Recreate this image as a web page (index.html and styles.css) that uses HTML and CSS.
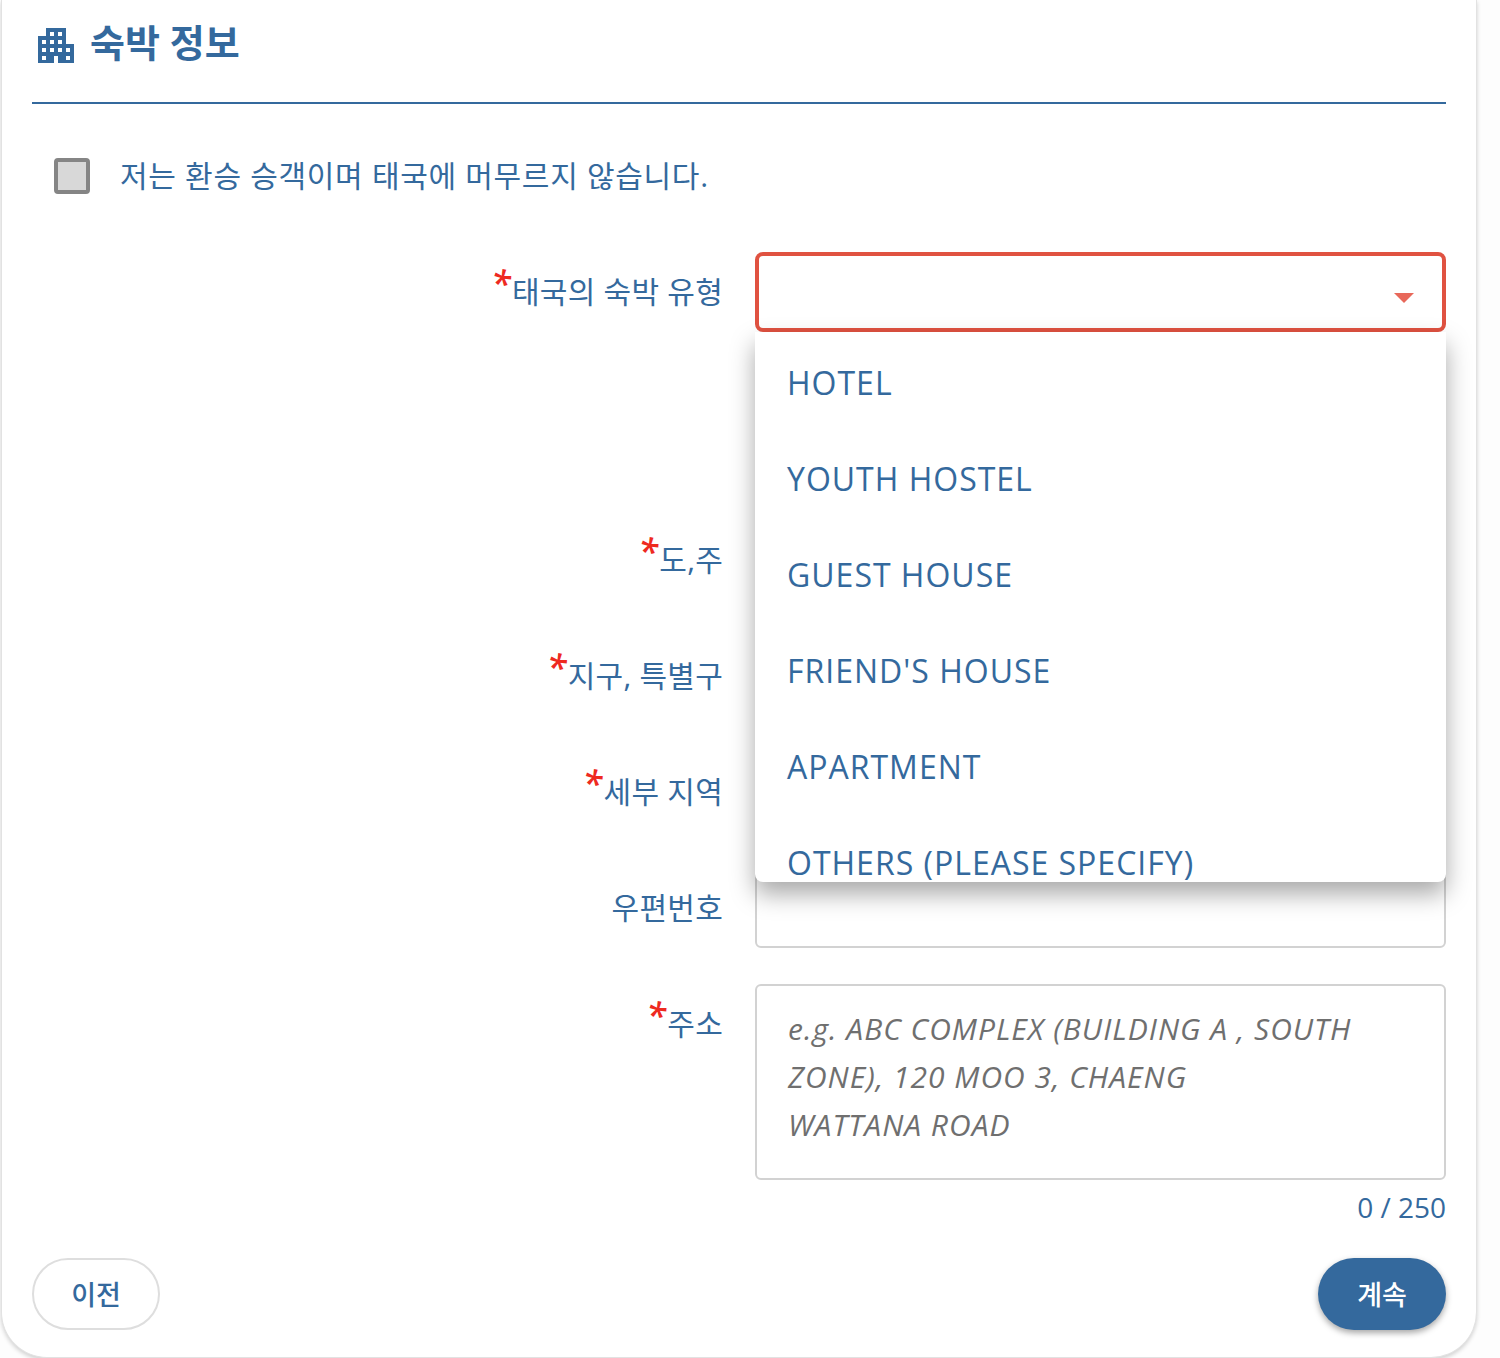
FILE: index.html
```html
<!DOCTYPE html>
<html lang="ko">
<head>
<meta charset="utf-8">
<title>숙박 정보</title>
<link rel="stylesheet" href="styles.css">
</head>
<body>
<main class="card">
  <header class="heading">
    <svg class="heading-icon" viewBox="0 0 36 35" aria-hidden="true">
      <path fill-rule="evenodd" d="M8 0H28V16H36V35H20V28H16V35H0V8H8ZM12 4V8H16V4ZM20 4V8H24V4ZM4 12V16H8V12ZM12 12V16H16V12ZM20 12V16H24V12ZM4 20V24H8V20ZM12 20V24H16V20ZM20 20V24H24V20ZM28 20V24H32V20ZM4 28V32H8V28ZM28 28V32H32V28Z"/>
    </svg>
    <h1 class="heading-text">숙박 정보</h1>
  </header>

  <label class="transit">
    <span class="checkbox"></span>
    <span>저는 환승 승객이며 태국에 머무르지 않습니다.</span>
  </label>

  <div class="form">
    <div class="row row-type">
      <div class="label"><span class="star">*</span>태국의 숙박 유형</div>
      <div class="field-wrap">
        <div class="field field-error"><span class="caret"></span></div>
        <ul class="menu">
          <li>HOTEL</li>
          <li>YOUTH HOSTEL</li>
          <li>GUEST HOUSE</li>
          <li>FRIEND'S HOUSE</li>
          <li>APARTMENT</li>
          <li>OTHERS (PLEASE SPECIFY)</li>
        </ul>
      </div>
    </div>
    <div class="row">
      <div class="label"><span class="star">*</span>도,주</div>
      <div class="field-wrap"><div class="field"></div></div>
    </div>
    <div class="row">
      <div class="label"><span class="star">*</span>지구, 특별구</div>
      <div class="field-wrap"><div class="field"></div></div>
    </div>
    <div class="row">
      <div class="label"><span class="star">*</span>세부 지역</div>
      <div class="field-wrap"><div class="field"></div></div>
    </div>
    <div class="row">
      <div class="label">우편번호</div>
      <div class="field-wrap"><div class="field"></div></div>
    </div>
    <div class="row">
      <div class="label"><span class="star">*</span>주소</div>
      <div class="field-wrap">
        <div class="field field-area">e.g. ABC COMPLEX (BUILDING A , SOUTH<br>ZONE), 120 MOO 3, CHAENG<br>WATTANA ROAD</div>
        <div class="counter">0 / 250</div>
      </div>
    </div>
  </div>

  <footer class="actions">
    <button class="btn btn-back" type="button">이전</button>
    <button class="btn btn-next" type="button">계속</button>
  </footer>
</main>
</body>
</html>
```

FILE: styles.css
```css
* { box-sizing: border-box; }
html, body { margin: 0; height: 100%; }
body {
  background: #fdfdfd;
  overflow: hidden;
  font-family: "Open Sans", "Noto Sans CJK KR", sans-serif;
  color: #34699d;
}
.card {
  margin-left: 1px;
  width: 1476px;
  height: 1358px;
  padding: 0 30px 0 30px;
  background: #fff;
  border-radius: 0 0 46px 46px;
  border: 1px solid #e2e2e2;
  border-top: 0;
  box-shadow: 0 2px 4px rgba(0, 0, 0, .18);
  display: flex;
  flex-direction: column;
}
.heading {
  height: 104px;
  border-bottom: 2px solid #34699d;
  padding: 24px 0 0 6px;
  display: flex;
  align-items: flex-start;
  gap: 16px;
}
.heading-icon { width: 36px; height: 35px; margin-top: 4px; fill: #34699d; }
.heading-text {
  margin: 0;
  font-size: 38px;
  line-height: 36px;
  font-weight: 700;
}
.transit {
  margin: 54px 0 0 22px;
  display: flex;
  align-items: center;
  gap: 30px;
  font-size: 30px;
  line-height: 36px;
  letter-spacing: .7px;
}
.checkbox {
  width: 36px;
  height: 36px;
  background: #d8d8d8;
  border: 4px solid #858585;
  border-radius: 4px;
}
.form {
  margin-top: 58px;
  display: flex;
  flex-direction: column;
  gap: 36px;
}
.row { display: flex; gap: 32px; }
.row-type { margin-bottom: 152px; }
.label {
  width: 691px;
  padding-top: 19px;
  text-align: right;
  font-size: 30px;
  line-height: 42px;
  letter-spacing: .25px;
  white-space: nowrap;
}
.star {
  margin-right: 1px;
  color: #ee2a1f;
  font-size: 36px;
  font-style: italic;
  font-weight: 600;
  line-height: 0;
  vertical-align: 6px;
}
.field-wrap { position: relative; width: 691px; }
.field {
  height: 80px;
  border: 2px solid #d2d2d2;
  border-radius: 6px;
  background: #fff;
}
.field-error {
  position: relative;
  border: 4px solid #e05241;
  border-radius: 8px;
}
.caret {
  position: absolute;
  right: 28px;
  top: 37px;
  border-style: solid;
  border-width: 10px 10px 0;
  border-color: #e8685a transparent transparent;
}
.menu {
  position: absolute;
  z-index: 2;
  top: 80px;
  left: 0;
  width: 100%;
  height: 550px;
  margin: 0;
  padding: 3px 0 0;
  list-style: none;
  overflow: hidden;
  background: #fff;
  border-radius: 0 0 8px 8px;
  box-shadow: 0 12px 24px rgba(0, 0, 0, .34);
}
.menu li {
  height: 96px;
  padding-left: 32px;
  font-size: 32px;
  line-height: 96px;
  letter-spacing: 1px;
}
.field-area {
  height: 196px;
  padding: 19px 30px 0 31px;
  font-size: 30px;
  font-style: italic;
  line-height: 48px;
  letter-spacing: 1px;
  color: #6f6f6f;
}
.counter {
  margin-top: 9px;
  text-align: right;
  font-size: 28px;
  line-height: 36px;
}
.actions {
  margin-top: 33px;
  display: flex;
  justify-content: space-between;
}
.btn {
  width: 128px;
  height: 72px;
  padding: 0 0 2px;
  border-radius: 36px;
  font-family: inherit;
  font-size: 27px;
  font-weight: 500;
}
.btn-back {
  background: #fff;
  border: 2px solid #dedede;
  color: #34699d;
}
.btn-next {
  background: #34699d;
  border: 0;
  color: #fff;
  box-shadow: 0 3px 6px rgba(0, 0, 0, .35);
}
```
